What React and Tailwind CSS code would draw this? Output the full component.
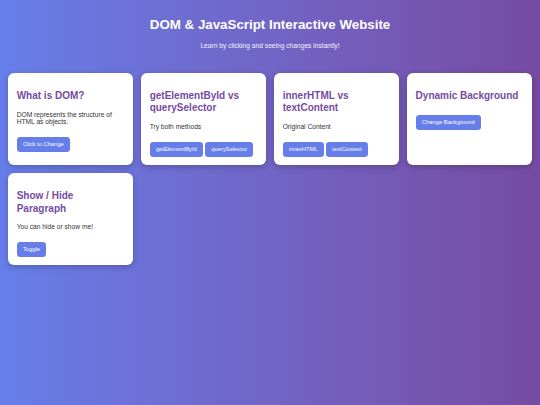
import { useState } from "react";

const font = { fontFamily: '"Liberation Sans", Arial, sans-serif' };

const Btn = ({ children, onClick }) => (
  <button
    onClick={onClick}
    className="rounded-[3.3px] bg-[#667eea] px-[6.25px] py-[4.17px] text-[5.8px] leading-[1.15] text-white hover:bg-[#5a6fd6]"
  >
    {children}
  </button>
);

const Card = ({ title, children }) => (
  <div className="flex flex-col items-start rounded-[6px] bg-white p-[8.33px] shadow-[0_2px_6px_rgba(0,0,0,0.22)]">
    <h2 className="mt-[8.3px] text-[10px] font-bold leading-[1.24] text-[#764ba2]">{title}</h2>
    {children}
  </div>
);

const Text = ({ children }) => (
  <p className="mt-[8.3px] text-[6.67px] leading-[7.7px] text-[#333]">{children}</p>
);

const Row = ({ children, first }) => (
  <div className={first ? "mt-[4.17px] flex gap-[2px]" : "mt-[11px] flex gap-[2px]"}>{children}</div>
);

export default function App() {
  const [domText, setDomText] = useState("DOM represents the structure of HTML as objects.");
  const [method, setMethod] = useState("Try both methods");
  const [content, setContent] = useState("Original Content");
  const [shown, setShown] = useState(true);

  return (
    <div
      style={font}
      className="min-h-screen bg-gradient-to-r from-[#667eea] to-[#764ba2] px-[8.33px]"
    >
      <header className="flex flex-col items-center pt-[17.3px] pb-[15px] text-center text-white">
        <h1 className="text-[13.33px] font-bold leading-[15.3px]">DOM &amp; JavaScript Interactive Website</h1>
        <p className="mt-[8.93px] text-[6.67px] leading-[7.67px] text-white/90">
          Learn by clicking and seeing changes instantly!
        </p>
      </header>

      <div className="grid grid-cols-4 gap-[8.6px] pt-[9px]">
        <Card title="What is DOM?">
          <Text>{domText}</Text>
          <Row>
            <Btn onClick={() => setDomText("The DOM lets JavaScript change the page.")}>Click to Change</Btn>
          </Row>
        </Card>

        <Card title="getElementById vs querySelector">
          <Text>{method}</Text>
          <Row>
            <Btn onClick={() => setMethod("Changed with getElementById")}>getElementById</Btn>
            <Btn onClick={() => setMethod("Changed with querySelector")}>querySelector</Btn>
          </Row>
        </Card>

        <Card title="innerHTML vs textContent">
          <Text>{content}</Text>
          <Row>
            <Btn onClick={() => setContent("Changed with innerHTML")}>innerHTML</Btn>
            <Btn onClick={() => setContent("Changed with textContent")}>textContent</Btn>
          </Row>
        </Card>

        <Card title="Dynamic Background">
          <div className="mt-[8.3px]">
            <Row first>
              <Btn>Change Background</Btn>
            </Row>
          </div>
        </Card>

        <Card title="Show / Hide Paragraph">
          <Text>{shown ? "You can hide or show me!" : "\u00a0"}</Text>
          <Row>
            <Btn onClick={() => setShown((s) => !s)}>Toggle</Btn>
          </Row>
        </Card>
      </div>
    </div>
  );
}
